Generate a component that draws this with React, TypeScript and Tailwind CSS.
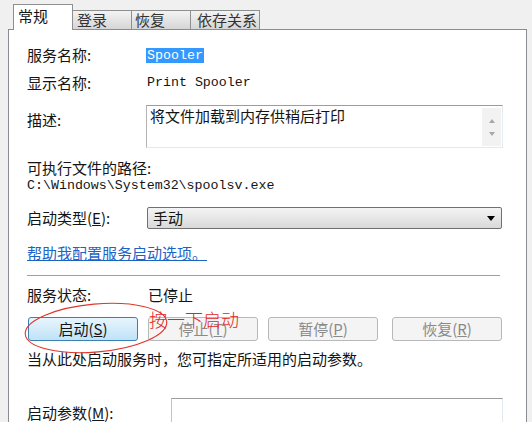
export default function App() {
  return (
    <div className="relative w-[532px] h-[422px] overflow-hidden bg-[#f0f0f0] font-['Noto_Sans_CJK_SC','Noto_Sans',sans-serif] text-[15px] leading-[20px] text-[#141414]">
      {/* Tabs */}
      <div className="flex items-end h-[29px] pl-[13px]">
        <div className="relative z-10 -mb-px h-[26px] w-[60px] border border-b-0 border-[#8e8f8f] bg-white pl-[4px] leading-[21px]">
          常规
        </div>
        <div className="h-[19px] w-[60px] -ml-px border border-b-0 border-[#8e8f8f] bg-linear-to-b from-[#f3f3f3] to-[#d6d6d6] pl-[4px] leading-[18px] text-[#333]">
          登录
        </div>
        <div className="h-[19px] w-[60px] -ml-px border border-b-0 border-[#8e8f8f] bg-linear-to-b from-[#f3f3f3] to-[#d6d6d6] pl-[3px] leading-[18px] text-[#333]">
          恢复
        </div>
        <div className="h-[19px] w-[70px] -ml-px border border-b-0 border-[#8e8f8f] bg-linear-to-b from-[#f3f3f3] to-[#d6d6d6] pl-[6px] leading-[18px] text-[#333]">
          依存关系
        </div>
      </div>

      {/* Panel */}
      <div className="ml-[8px] w-[519px] h-[420px] border border-[#898c95] bg-white pl-[18px] pr-[23px] flex flex-col">
        <div className="mt-[15px] flex items-center h-[20px]">
          <div className="w-[119px]">服务名称:</div>
          <span className="font-['Liberation_Mono',monospace] text-[13.3px] leading-[15px] bg-[#3399ff] text-white px-[1px]">
            Spooler
          </span>
        </div>
        <div className="mt-[8px] flex items-center h-[20px]">
          <div className="w-[120px]">显示名称:</div>
          <span className="font-['Liberation_Mono',monospace] text-[13.3px]">Print Spooler</span>
        </div>
        <div className="mt-[12px] flex items-start">
          <div className="w-[119px] mt-[5px]">描述:</div>
          <div className="w-[357px] h-[43px] border border-[#e3e9ef] border-t-[#9d9d9d] border-l-[#b4b4b4] flex">
            <div className="flex-1 pl-[3px]">将文件加载到内存供稍后打印</div>
            <div className="w-[19px] mt-[2px] h-[38px] mr-[1px] bg-[#f2f2f2] flex flex-col items-center justify-center gap-[9px]">
              <svg width="6" height="4" viewBox="0 0 6 4">
                <path d="M0 4 L3 0 L6 4 Z" fill="#a8a8a8" />
              </svg>
              <svg width="6" height="4" viewBox="0 0 6 4">
                <path d="M0 0 L6 0 L3 4 Z" fill="#a8a8a8" />
              </svg>
            </div>
          </div>
        </div>
        <div className="mt-[10px] h-[20px]">可执行文件的路径:</div>
        <div className="mt-0 h-[16px] leading-[16px] font-['Liberation_Mono',monospace] text-[13.3px]">
          C:\Windows\System32\spoolsv.exe
        </div>
        <div className="mt-[13px] flex items-center h-[22px]">
          <div className="w-[120px]">
            启动类型(<span className="underline">E</span>):
          </div>
          <div className="w-[355px] h-[22px] border border-[#707070] rounded-[2px] bg-linear-to-b from-[#f4f4f4] to-[#d9d9d9] flex items-center justify-between pl-[5px] pr-[6px]">
            <span>手动</span>
            <svg width="8" height="5" viewBox="0 0 8 5">
              <path d="M0 0 L8 0 L4 5 Z" fill="#000" />
            </svg>
          </div>
        </div>
        <div className="mt-[14px] h-[20px] text-[#1c63c6] underline">帮助我配置服务启动选项。</div>
        <div className="mt-[12px] h-px w-[473px] bg-[#a0a0a0]" />
        <div className="mt-[9px] flex items-center h-[20px]">
          <div className="w-[121px]">服务状态:</div>
          <span>已停止</span>
        </div>
        <div className="mt-[12px] flex h-[24px]">
          <div className="ml-[1px] w-[110px] h-[24px] border border-[#3c7fb1] rounded-[3px] bg-linear-to-b from-[#e8f5fd] to-[#bfe3f7] flex items-center justify-center">
            启动(<span className="underline">S</span>)
          </div>
          <div className="ml-[10px] w-[110px] h-[24px] border border-[#b5b9bc] rounded-[3px] bg-[#f4f4f4] text-[#8a8a8a] flex items-center justify-center">
            停止(<span className="underline">T</span>)
          </div>
          <div className="ml-[10px] w-[110px] h-[24px] border border-[#b5b9bc] rounded-[3px] bg-[#f4f4f4] text-[#8a8a8a] flex items-center justify-center">
            暂停(<span className="underline">P</span>)
          </div>
          <div className="ml-[14px] w-[110px] h-[24px] border border-[#b5b9bc] rounded-[3px] bg-[#f4f4f4] text-[#8a8a8a] flex items-center justify-center">
            恢复(<span className="underline">R</span>)
          </div>
        </div>
        <div className="mt-[8px] h-[20px]">当从此处启动服务时，您可指定所适用的启动参数。</div>
        <div className="mt-[29px] flex items-start">
          <div className="w-[144px] mt-[5px]">
            启动参数(<span className="underline">M</span>):
          </div>
          <div className="w-[332px] h-[30px] border border-[#e3e9ef] border-t-[#9d9d9d] border-l-[#c4c4c4]" />
        </div>
      </div>

      {/* Red annotation */}
      <svg className="absolute left-0 top-0 pointer-events-none" width="532" height="422" viewBox="0 0 532 422">
        <ellipse cx="96" cy="328" rx="71" ry="24" transform="rotate(-5 96 328)" fill="none" stroke="#e0342b" strokeWidth="1.1" />
      </svg>
      <div className="absolute left-[149px] top-[308px] text-[18px] leading-[22px] font-light text-[#e3261d] pointer-events-none">
        按一下启动
      </div>
    </div>
  );
}
